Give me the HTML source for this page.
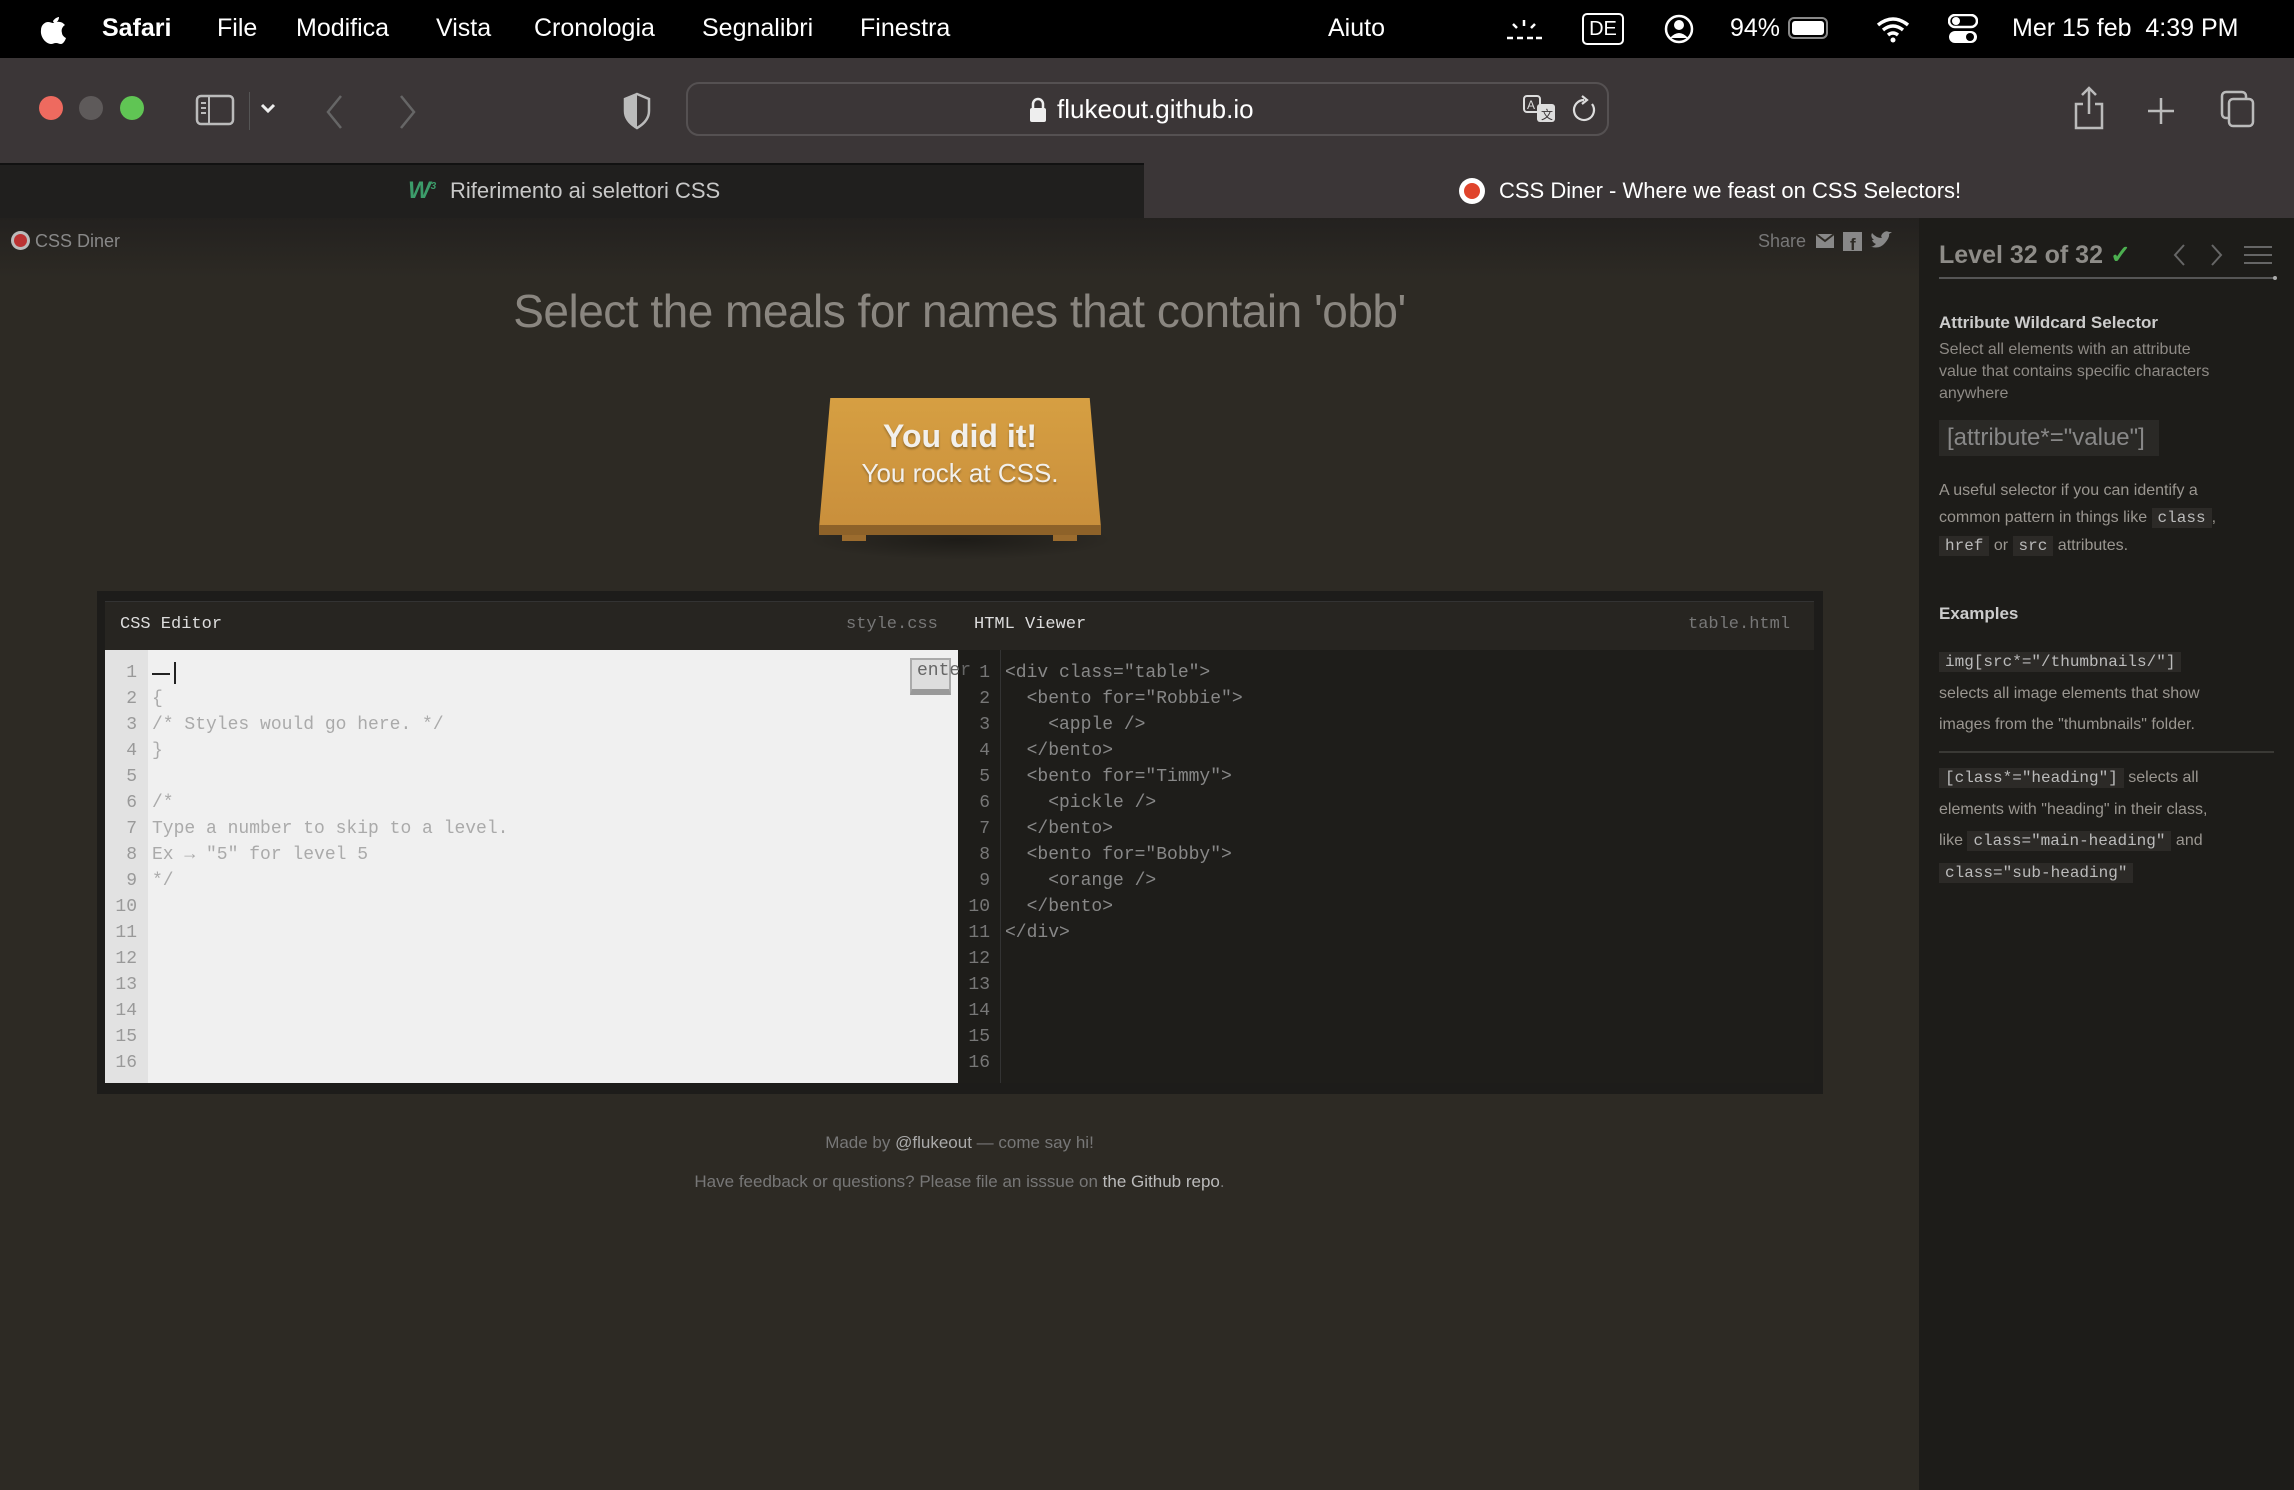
<!DOCTYPE html>
<html><head><meta charset="utf-8"><style>
*{margin:0;padding:0;box-sizing:border-box}
body{width:2294px;height:1490px;overflow:hidden;background:#2d2a24;font-family:"Liberation Sans",sans-serif;position:relative}
.a{position:absolute;white-space:nowrap}
.menu{left:0;top:0;width:2294px;height:58px;background:#000;color:#fff;font-size:25px}
.menu span{position:absolute;top:14px}
.tool{left:0;top:58px;width:2294px;height:105px;background:#3b3637}
.tabs{left:0;top:163px;width:2294px;height:55px;background:#3b3637}
.mono{font-family:"Liberation Mono",monospace}
.ln{position:absolute;font-family:"Liberation Mono",monospace;font-size:18px;line-height:26px}
.code{background:#2c2a27;color:#bbb;font-family:"Liberation Mono",monospace;padding:1px 6px}
</style></head><body>
<div class="a menu">
<svg class="a" style="left:40px;top:12px" width="26" height="32" viewBox="0 0 26 32"><path d="M13 9c2-3 5-4 6-4 0 2-1 5-4 6-1 0-2-1-2-2zM13 11c2 0 4-2 7-1 2 0 4 2 5 3-3 2-4 5-3 8 0 2 2 4 4 5-1 3-3 6-5 6-2 0-3-1-5-1s-3 1-5 1C6 32 0 25 1 18c0-5 4-8 7-8 2 0 4 1 5 1z" fill="#fff"/></svg>
<span style="left:102px;font-weight:bold">Safari</span>
<span style="left:217px">File</span>
<span style="left:296px">Modifica</span>
<span style="left:436px">Vista</span>
<span style="left:534px">Cronologia</span>
<span style="left:702px">Segnalibri</span>
<span style="left:860px">Finestra</span>
<span style="left:1328px">Aiuto</span>
<svg class="a" style="left:1505px;top:18px" width="38" height="24"><g stroke="#fff" stroke-width="2.5"><path d="M19 2v6M8 6l4 4M30 6l-4 4M2 20h6M12 20h6M22 20h6M31 20h6"/></g></svg>
<div class="a" style="left:1582px;top:13px;width:42px;height:32px;border:2px solid #fff;border-radius:5px;font-size:20px;text-align:center;line-height:28px">DE</div>
<svg class="a" style="left:1664px;top:14px" width="30" height="30"><circle cx="15" cy="15" r="13" fill="none" stroke="#fff" stroke-width="2.5"/><circle cx="15" cy="11" r="5" fill="#fff"/><path d="M6 24q9-10 18 0" fill="#fff"/></svg>
<span style="left:1730px">94%</span>
<div class="a" style="left:1788px;top:17px;width:40px;height:22px;border:2px solid #888;border-radius:6px;padding:2px"><div style="width:32px;height:14px;background:#fff;border-radius:3px"></div></div>
<svg class="a" style="left:1875px;top:15px" width="36" height="28"><g fill="none" stroke="#fff" stroke-width="3.5"><path d="M3 10q15-12 30 0M8 15q10-8 20 0M13 20q5-4 10 0"/></g><circle cx="18" cy="25" r="2.5" fill="#fff"/></svg>
<svg class="a" style="left:1948px;top:14px" width="30" height="30"><rect x="1" y="1" width="28" height="12" rx="6" fill="none" stroke="#fff" stroke-width="2.5"/><circle cx="8" cy="7" r="4" fill="#fff"/><rect x="1" y="17" width="28" height="12" rx="6" fill="#fff"/><circle cx="22" cy="23" r="4" fill="#000"/></svg>
<span style="left:2012px">Mer 15 feb&nbsp; 4:39 PM</span>
</div>
<div class="a tool">
<div class="a" style="left:39px;top:38px;width:24px;height:24px;border-radius:50%;background:#ee6a5f"></div>
<div class="a" style="left:79px;top:38px;width:24px;height:24px;border-radius:50%;background:#5e5a5a"></div>
<div class="a" style="left:120px;top:38px;width:24px;height:24px;border-radius:50%;background:#60c554"></div>
<svg class="a" style="left:195px;top:36px" width="40" height="32"><rect x="2" y="2" width="36" height="28" rx="4" fill="none" stroke="#bbb" stroke-width="2.5"/><path d="M14 2v28M6 9h5M6 14h5M6 19h5" stroke="#bbb" stroke-width="2"/></svg>
<div class="a" style="left:249px;top:34px;width:1px;height:38px;background:#555"></div>
<svg class="a" style="left:260px;top:45px" width="16" height="12"><path d="M2 2l6 6 6-6" fill="none" stroke="#eee" stroke-width="3"/></svg>
<svg class="a" style="left:325px;top:36px" width="20" height="36"><path d="M16 2L3 18l13 16" fill="none" stroke="#666" stroke-width="2.5"/></svg>
<svg class="a" style="left:397px;top:36px" width="20" height="36"><path d="M4 2l13 16L4 34" fill="none" stroke="#666" stroke-width="2.5"/></svg>
<svg class="a" style="left:622px;top:34px" width="30" height="38"><path d="M15 2l12 5v12q0 10-12 17Q3 29 3 19V7z" fill="none" stroke="#bbb" stroke-width="2.5"/><path d="M15 2v34Q3 29 3 19V7z" fill="#bbb"/></svg>
<div class="a" style="left:686px;top:24px;width:923px;height:54px;border:2px solid #555152;border-radius:13px"></div>
<svg class="a" style="left:1029px;top:39px" width="18" height="26"><rect x="1" y="11" width="16" height="14" rx="2" fill="#eee"/><path d="M4 12V7a5 5 0 0110 0v5" fill="none" stroke="#eee" stroke-width="2.5"/></svg>
<span class="a" style="left:1057px;top:36px;color:#fff;font-size:26px">flukeout.github.io</span>
<svg class="a" style="left:1522px;top:36px" width="36" height="32"><rect x="2" y="2" width="16" height="16" rx="3" fill="none" stroke="#ddd" stroke-width="2"/><text x="5" y="15" font-size="12" fill="#ddd" font-family="Liberation Sans">A</text><rect x="15" y="10" width="18" height="18" rx="3" fill="#ddd"/><text x="19" y="25" font-size="12" fill="#3b3637" font-family="Noto Sans CJK SC">文</text></svg>
<svg class="a" style="left:1572px;top:36px" width="26" height="30"><path d="M20 10a10 10 0 1 1-8-4" fill="none" stroke="#ddd" stroke-width="2.2"/><path d="M10 2l5 4-5 4" fill="none" stroke="#ddd" stroke-width="2.2"/></svg>
<svg class="a" style="left:2073px;top:28px" width="32" height="44"><path d="M10 18H3v24h26V18h-7M16 2v26M9 9l7-7 7 7" fill="none" stroke="#bbb" stroke-width="2.5"/></svg>
<svg class="a" style="left:2146px;top:38px" width="30" height="30"><path d="M15 2v26M2 15h26" stroke="#bbb" stroke-width="2.5"/></svg>
<svg class="a" style="left:2220px;top:32px" width="36" height="38"><rect x="2" y="2" width="24" height="26" rx="4" fill="none" stroke="#bbb" stroke-width="2.5"/><rect x="9" y="9" width="24" height="27" rx="4" fill="#3b3637" stroke="#bbb" stroke-width="2.5"/></svg>
</div>
<div class="a tabs">
<div class="a" style="left:0;top:0;width:1144px;height:55px;background:#201f1e;border-top:2px solid #111"></div>
<span class="a" style="left:408px;top:14px;color:#3c9c6a;font-weight:bold;font-size:24px;font-style:italic">W<sup style="font-size:10px">3</sup></span>
<span class="a" style="left:450px;top:15px;color:#c8c8c8;font-size:22px">Riferimento ai selettori CSS</span>
<div class="a" style="left:1459px;top:15px;width:26px;height:26px;border-radius:50%;background:#fff"></div>
<div class="a" style="left:1464px;top:20px;width:16px;height:16px;border-radius:50%;background:#e0442c"></div>
<span class="a" style="left:1499px;top:15px;color:#fff;font-size:22px">CSS Diner - Where we feast on CSS Selectors!</span>
</div>
<!-- page -->
<div class="a" style="left:0;top:218px;width:1919px;height:60px;background:linear-gradient(#23211f,#2d2a24)"></div>
<div class="a" style="left:11px;top:231px;width:19px;height:19px;border-radius:50%;background:#bbb"></div>
<div class="a" style="left:14px;top:234px;width:13px;height:13px;border-radius:50%;background:#b33"></div>
<span class="a" style="left:35px;top:231px;color:#888;font-size:18px">CSS Diner</span>
<span class="a" style="left:1758px;top:231px;color:#777;font-size:18px">Share</span>
<svg class="a" style="left:1816px;top:231px" width="80" height="22"><rect x="0" y="3" width="18" height="14" fill="#888"/><path d="M0 3l9 7 9-7" stroke="#2d2a24" stroke-width="2" fill="none"/><rect x="27" y="1" width="19" height="19" fill="#888"/><text x="34" y="19" font-size="17" font-weight="bold" fill="#2d2a24" font-family="Liberation Sans">f</text><path d="M56 16q8 2 13-4t4-9l3-2-3 0q-3-2-6 1t-1 5q-6 0-10-5-2 4 2 7l-2 0q1 3 4 4-3 3-6 3z" fill="#888"/></svg>
<div class="a" style="left:0;top:284px;width:1919px;text-align:center;color:#8a8680;font-size:46px;letter-spacing:-0.5px">Select the meals for names that contain 'obb'</div>
<div class="a" style="left:805px;top:520px;width:310px;height:40px;background:radial-gradient(ellipse,rgba(0,0,0,.35),transparent 70%)"></div>
<div class="a" style="left:819px;top:398px;width:282px;height:130px;background:linear-gradient(#d69f42,#c98f3c);clip-path:polygon(4% 0,96% 0,100% 100%,0 100%)"></div>
<div class="a" style="left:819px;top:525px;width:282px;height:10px;background:#8e6229"></div>
<div class="a" style="left:842px;top:535px;width:24px;height:6px;background:#9c6c2e"></div>
<div class="a" style="left:1053px;top:535px;width:24px;height:6px;background:#9c6c2e"></div>
<div class="a" style="left:819px;top:418px;width:282px;text-align:center;color:#f2f0ec;font-size:32px;font-weight:bold;text-shadow:0 2px 2px rgba(0,0,0,.3)">You did it!</div>
<div class="a" style="left:819px;top:458px;width:282px;text-align:center;color:#f2f0ec;font-size:26px;text-shadow:0 2px 2px rgba(0,0,0,.3)">You rock at CSS.</div>
<!-- editor -->
<div class="a" style="left:97px;top:591px;width:1726px;height:503px;background:#1d1c1a"></div>
<div class="a" style="left:105px;top:601px;width:1709px;height:49px;background:#272521;border-top:1px solid #333"></div>
<span class="a mono" style="left:120px;top:615px;color:#ddd;font-size:17px">CSS Editor</span>
<span class="a mono" style="left:846px;top:615px;color:#777;font-size:17px">style.css</span>
<span class="a mono" style="left:974px;top:615px;color:#ddd;font-size:17px">HTML Viewer</span>
<span class="a mono" style="left:1688px;top:615px;color:#777;font-size:17px">table.html</span>
<div class="a" style="left:105px;top:650px;width:853px;height:433px;background:#f0f0f0"></div>
<div class="a" style="left:105px;top:650px;width:43px;height:433px;background:#e2e2e2"></div>
<div class="ln" style="left:105px;top:660px;width:32px;text-align:right;color:#999">1<br>2<br>3<br>4<br>5<br>6<br>7<br>8<br>9<br>10<br>11<br>12<br>13<br>14<br>15<br>16</div>
<div class="ln" style="left:152px;top:660px;color:#aaa">&nbsp;<br>{<br>/* Styles would go here. */<br>}<br><br>/*<br>Type a number to skip to a level.<br>Ex → "5" for level 5<br>*/</div>
<div class="a" style="left:152px;top:673px;width:18px;height:2px;background:#222"></div>
<div class="a" style="left:174px;top:662px;width:2px;height:22px;background:#222"></div>
<div class="a" style="left:958px;top:650px;width:856px;height:433px;background:#1e1d1a"></div>
<div class="a" style="left:1000px;top:650px;width:1px;height:433px;background:#333"></div>
<div class="ln" style="left:958px;top:660px;width:32px;text-align:right;color:#777">1<br>2<br>3<br>4<br>5<br>6<br>7<br>8<br>9<br>10<br>11<br>12<br>13<br>14<br>15<br>16</div>
<div class="ln" style="left:1005px;top:660px;color:#888;white-space:pre">&lt;div class="table"&gt;
  &lt;bento for="Robbie"&gt;
    &lt;apple /&gt;
  &lt;/bento&gt;
  &lt;bento for="Timmy"&gt;
    &lt;pickle /&gt;
  &lt;/bento&gt;
  &lt;bento for="Bobby"&gt;
    &lt;orange /&gt;
  &lt;/bento&gt;
&lt;/div&gt;</div>
<div class="a" style="left:910px;top:658px;width:41px;height:37px;background:#ddd;border:2px solid #aaa;border-bottom:6px solid #999"></div>
<span class="a mono" style="left:917px;top:661px;color:#666;font-size:18px">enter</span>
<div class="a" style="left:0;top:1133px;width:1919px;text-align:center;color:#777;font-size:17px">Made by <span style="color:#aaa">@flukeout</span> — come say hi!</div>
<div class="a" style="left:0;top:1172px;width:1919px;text-align:center;color:#777;font-size:17px">Have feedback or questions? Please file an isssue on <span style="color:#bbb">the Github repo</span>.</div>
<!-- sidebar -->
<div class="a" style="left:1919px;top:218px;width:375px;height:1272px;background:#1d1c19"></div>
<span class="a" style="left:1939px;top:240px;color:#8e8c88;font-size:25px;font-weight:bold">Level 32 of 32 <span style="color:#4caf50">✓</span></span>
<svg class="a" style="left:2172px;top:243px" width="110" height="24"><path d="M12 2L3 12l9 10M40 2l9 10-9 10" fill="none" stroke="#666" stroke-width="2"/><path d="M72 4h28M72 12h28M72 20h28" stroke="#666" stroke-width="2"/></svg>
<div class="a" style="left:1939px;top:277px;width:335px;height:2px;background:#555"></div>
<div class="a" style="left:2273px;top:276px;width:4px;height:4px;border-radius:50%;background:#aaa"></div>
<span class="a" style="left:1939px;top:313px;color:#ccc;font-size:17px;font-weight:bold">Attribute Wildcard Selector</span>
<div class="a" style="left:1939px;top:339px;color:#8e8a85;font-size:16px;line-height:22px">Select all elements with an attribute<br>value that contains specific characters<br>anywhere</div>
<div class="a" style="left:1939px;top:420px;width:220px;height:36px;background:#2a2926"></div>
<span class="a" style="left:1947px;top:424px;color:#888;font-size:24px">[attribute*="value"]</span>
<div class="a" style="left:1939px;top:477px;color:#9a9690;font-size:16px;line-height:27px">A useful selector if you can identify a<br>common pattern in things like <span class="code">class</span>,<br><span class="code">href</span> or <span class="code">src</span> attributes.</div>
<span class="a" style="left:1939px;top:604px;color:#ccc;font-size:17px;font-weight:bold">Examples</span>
<div class="a" style="left:1939px;top:646px;color:#9a9690;font-size:16px;line-height:31px"><span class="code">img[src*="/thumbnails/"]</span><br>selects all image elements that show<br>images from the "thumbnails" folder.</div>
<div class="a" style="left:1939px;top:751px;width:335px;height:2px;background:#3a3935"></div>
<div class="a" style="left:1939px;top:762px;color:#9a9690;font-size:16px;line-height:31px"><span class="code">[class*="heading"]</span> selects all<br>elements with "heading" in their class,<br>like <span class="code">class="main-heading"</span> and<br><span class="code">class="sub-heading"</span></div>
</body></html>
